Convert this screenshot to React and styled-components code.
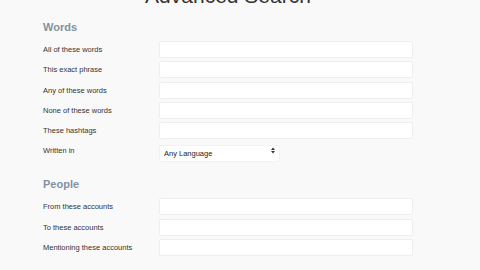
import React from "react";
import styled, { createGlobalStyle } from "styled-components";

const GlobalStyle = createGlobalStyle`
  html, body {
    margin: 0;
    padding: 0;
    background: #f9f9f9;
    overflow: hidden;
  }
  body {
    font-family: "Liberation Sans", Arial, sans-serif;
    color: #333;
  }
`;

const Page = styled("div")({
  width: 370,
  marginLeft: 43,
  marginTop: -15,
});

const Title = styled("h1")({
  margin: 0,
  fontSize: 21,
  lineHeight: "21px",
  fontWeight: 400,
  textAlign: "center",
  color: "#333",
});

const Section = styled("section")(({ $top }) => ({
  marginTop: $top,
}));

const Heading = styled("h2")({
  margin: 0,
  fontSize: 11,
  lineHeight: "14px",
  fontWeight: 700,
  color: "#8391a1",
  marginBottom: 7,
});

const Rows = styled("div")({
  display: "grid",
  rowGap: 3.3,
});

const Row = styled("label")({
  display: "grid",
  gridTemplateColumns: "116px 1fr",
  alignItems: "center",
  height: 17,
});

const Label = styled("span")({
  fontSize: 7.5,
  color: "#333",
  whiteSpace: "nowrap",
});

const Input = styled("input")({
  boxSizing: "border-box",
  width: 254,
  height: 17,
  margin: 0,
  padding: "0 5px",
  border: "1px solid #eeeeee",
  borderRadius: 2,
  background: "#fff",
  font: "inherit",
  fontSize: 7.5,
  outline: "none",
});

const SelectWrap = styled("div")({
  position: "relative",
  width: 121,
  height: 17,
});

const Select = styled("select")({
  appearance: "none",
  boxSizing: "border-box",
  width: "100%",
  height: 17,
  margin: 0,
  padding: "0 4px",
  border: "1px solid #f2f2f2",
  borderRadius: 2,
  background: "#fff",
  fontFamily: "inherit",
  fontSize: 7.5,
  color: "#222",
  outline: "none",
});

const Arrows = styled("svg")({
  position: "absolute",
  right: 5,
  top: 5,
  width: 4,
  height: 7,
  pointerEvents: "none",
});

const words = [
  "All of these words",
  "This exact phrase",
  "Any of these words",
  "None of these words",
  "These hashtags",
];

const people = ["From these accounts", "To these accounts", "Mentioning these accounts"];

const App = () => {
  return (
    <Page>
      <GlobalStyle />
      <Title>Advanced Search</Title>
      <Section $top={14}>
        <Heading>Words</Heading>
        <Rows>
          {words.map((w) => (
            <Row key={w}>
              <Label>{w}</Label>
              <Input type="text" />
            </Row>
          ))}
          <Row>
            <Label>Written in</Label>
            <SelectWrap>
              <Select defaultValue="any">
                <option value="any">Any Language</option>
              </Select>
              <Arrows viewBox="0 0 4 7">
                <path d="M0 3 L2 0.5 L4 3 Z M0 4 L2 6.5 L4 4 Z" fill="#333" />
              </Arrows>
            </SelectWrap>
          </Row>
        </Rows>
      </Section>
      <Section $top={18}>
        <Heading>People</Heading>
        <Rows>
          {people.map((p) => (
            <Row key={p}>
              <Label>{p}</Label>
              <Input type="text" />
            </Row>
          ))}
        </Rows>
      </Section>
    </Page>
  );
};

export default App;
